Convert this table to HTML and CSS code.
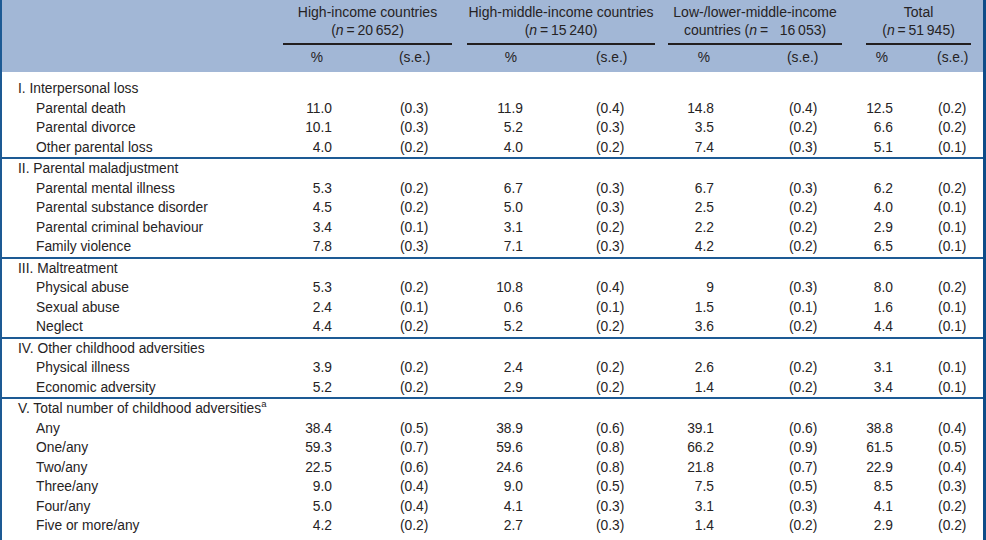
FILE: index.html
```html
<!DOCTYPE html>
<html lang="en">
<head>
<meta charset="utf-8">
<title>Childhood adversities by country income group</title>
<link rel="stylesheet" href="styles.css">
</head>
<body>
<div class="frame">
<table class="adv">
  <colgroup>
    <col class="c-lab">
    <col class="c-p1"><col class="c-s1">
    <col class="c-p2"><col class="c-s2">
    <col class="c-p3"><col class="c-s3">
    <col class="c-p4"><col class="c-s4">
  </colgroup>
  <thead>
    <tr class="groups">
      <th></th>
      <th colspan="2"><div class="grp g1">High-income countries<br>(<i>n</i>&thinsp;=&thinsp;20&thinsp;652)</div></th>
      <th colspan="2"><div class="grp g2">High-middle-income countries<br>(<i>n</i>&thinsp;=&thinsp;15&thinsp;240)</div></th>
      <th colspan="2"><div class="grp g3">Low-/lower-middle-income<br>countries (<i>n</i>&thinsp;=&nbsp;&nbsp;&nbsp;16&thinsp;053)</div></th>
      <th colspan="2"><div class="grp g4">Total<br>(<i>n</i>&thinsp;=&thinsp;51&thinsp;945)</div></th>
    </tr>
    <tr class="units">
      <th></th>
      <th class="p p1">%</th><th class="s s1">(s.e.)</th>
      <th class="p p2">%</th><th class="s s2">(s.e.)</th>
      <th class="p p3">%</th><th class="s s3">(s.e.)</th>
      <th class="p p4">%</th><th class="s s4">(s.e.)</th>
    </tr>
  </thead>
  <tbody class="sec first">
    <tr><td class="h" colspan="9">I. Interpersonal loss</td></tr>
    <tr><td class="item">Parental death</td><td class="p">11.0</td><td class="s s1">(0.3)</td><td class="p">11.9</td><td class="s s2">(0.4)</td><td class="p">14.8</td><td class="s s3">(0.4)</td><td class="p">12.5</td><td class="s s4">(0.2)</td></tr>
    <tr><td class="item">Parental divorce</td><td class="p">10.1</td><td class="s s1">(0.3)</td><td class="p">5.2</td><td class="s s2">(0.3)</td><td class="p">3.5</td><td class="s s3">(0.2)</td><td class="p">6.6</td><td class="s s4">(0.2)</td></tr>
    <tr><td class="item">Other parental loss</td><td class="p">4.0</td><td class="s s1">(0.2)</td><td class="p">4.0</td><td class="s s2">(0.2)</td><td class="p">7.4</td><td class="s s3">(0.3)</td><td class="p">5.1</td><td class="s s4">(0.1)</td></tr>
  </tbody>
  <tbody class="sec">
    <tr><td class="h" colspan="9">II. Parental maladjustment</td></tr>
    <tr><td class="item">Parental mental illness</td><td class="p">5.3</td><td class="s s1">(0.2)</td><td class="p">6.7</td><td class="s s2">(0.3)</td><td class="p">6.7</td><td class="s s3">(0.3)</td><td class="p">6.2</td><td class="s s4">(0.2)</td></tr>
    <tr><td class="item">Parental substance disorder</td><td class="p">4.5</td><td class="s s1">(0.2)</td><td class="p">5.0</td><td class="s s2">(0.3)</td><td class="p">2.5</td><td class="s s3">(0.2)</td><td class="p">4.0</td><td class="s s4">(0.1)</td></tr>
    <tr><td class="item">Parental criminal behaviour</td><td class="p">3.4</td><td class="s s1">(0.1)</td><td class="p">3.1</td><td class="s s2">(0.2)</td><td class="p">2.2</td><td class="s s3">(0.2)</td><td class="p">2.9</td><td class="s s4">(0.1)</td></tr>
    <tr><td class="item">Family violence</td><td class="p">7.8</td><td class="s s1">(0.3)</td><td class="p">7.1</td><td class="s s2">(0.3)</td><td class="p">4.2</td><td class="s s3">(0.2)</td><td class="p">6.5</td><td class="s s4">(0.1)</td></tr>
  </tbody>
  <tbody class="sec">
    <tr><td class="h" colspan="9">III. Maltreatment</td></tr>
    <tr><td class="item">Physical abuse</td><td class="p">5.3</td><td class="s s1">(0.2)</td><td class="p">10.8</td><td class="s s2">(0.4)</td><td class="p">9</td><td class="s s3">(0.3)</td><td class="p">8.0</td><td class="s s4">(0.2)</td></tr>
    <tr><td class="item">Sexual abuse</td><td class="p">2.4</td><td class="s s1">(0.1)</td><td class="p">0.6</td><td class="s s2">(0.1)</td><td class="p">1.5</td><td class="s s3">(0.1)</td><td class="p">1.6</td><td class="s s4">(0.1)</td></tr>
    <tr><td class="item">Neglect</td><td class="p">4.4</td><td class="s s1">(0.2)</td><td class="p">5.2</td><td class="s s2">(0.2)</td><td class="p">3.6</td><td class="s s3">(0.2)</td><td class="p">4.4</td><td class="s s4">(0.1)</td></tr>
  </tbody>
  <tbody class="sec">
    <tr><td class="h" colspan="9">IV. Other childhood adversities</td></tr>
    <tr><td class="item">Physical illness</td><td class="p">3.9</td><td class="s s1">(0.2)</td><td class="p">2.4</td><td class="s s2">(0.2)</td><td class="p">2.6</td><td class="s s3">(0.2)</td><td class="p">3.1</td><td class="s s4">(0.1)</td></tr>
    <tr><td class="item">Economic adversity</td><td class="p">5.2</td><td class="s s1">(0.2)</td><td class="p">2.9</td><td class="s s2">(0.2)</td><td class="p">1.4</td><td class="s s3">(0.2)</td><td class="p">3.4</td><td class="s s4">(0.1)</td></tr>
  </tbody>
  <tbody class="sec">
    <tr><td class="h" colspan="9">V. Total number of childhood adversities<sup>a</sup></td></tr>
    <tr><td class="item">Any</td><td class="p">38.4</td><td class="s s1">(0.5)</td><td class="p">38.9</td><td class="s s2">(0.6)</td><td class="p">39.1</td><td class="s s3">(0.6)</td><td class="p">38.8</td><td class="s s4">(0.4)</td></tr>
    <tr><td class="item">One/any</td><td class="p">59.3</td><td class="s s1">(0.7)</td><td class="p">59.6</td><td class="s s2">(0.8)</td><td class="p">66.2</td><td class="s s3">(0.9)</td><td class="p">61.5</td><td class="s s4">(0.5)</td></tr>
    <tr><td class="item">Two/any</td><td class="p">22.5</td><td class="s s1">(0.6)</td><td class="p">24.6</td><td class="s s2">(0.8)</td><td class="p">21.8</td><td class="s s3">(0.7)</td><td class="p">22.9</td><td class="s s4">(0.4)</td></tr>
    <tr><td class="item">Three/any</td><td class="p">9.0</td><td class="s s1">(0.4)</td><td class="p">9.0</td><td class="s s2">(0.5)</td><td class="p">7.5</td><td class="s s3">(0.5)</td><td class="p">8.5</td><td class="s s4">(0.3)</td></tr>
    <tr><td class="item">Four/any</td><td class="p">5.0</td><td class="s s1">(0.4)</td><td class="p">4.1</td><td class="s s2">(0.3)</td><td class="p">3.1</td><td class="s s3">(0.3)</td><td class="p">4.1</td><td class="s s4">(0.2)</td></tr>
    <tr><td class="item">Five or more/any</td><td class="p">4.2</td><td class="s s1">(0.2)</td><td class="p">2.7</td><td class="s s2">(0.3)</td><td class="p">1.4</td><td class="s s3">(0.2)</td><td class="p">2.9</td><td class="s s4">(0.2)</td></tr>
  </tbody>
</table>
</div>
</body>
</html>
```
FILE: styles.css
```css
html, body {
  margin: 0;
  padding: 0;
  background: #ffffff;
}
body {
  width: 986px;
  height: 540px;
  overflow: hidden;
}
.frame {
  width: 981px;
  height: 540px;
  border-left: 2px solid #1d5a94;
  border-right: 3px solid #0e4c88;
}
.adv {
  width: 981px;
  table-layout: fixed;
  border-collapse: separate;
  border-spacing: 0;
  font-family: "Liberation Sans", Arial, sans-serif;
  font-size: 13.8px;
  color: #262324;
}
.c-lab { width: 281px; }
.c-p1 { width: 49px; }
.c-s1 { width: 133px; }
.c-p2 { width: 58px; }
.c-s2 { width: 143px; }
.c-p3 { width: 48px; }
.c-s3 { width: 150px; }
.c-p4 { width: 29px; }
.c-s4 { width: 90px; }

thead { background: #a2b7d6; }
thead th {
  font-weight: normal;
  padding: 0;
}
.groups th {
  vertical-align: bottom;
  padding-top: 3px;
}
.grp {
  font-size: 14px;
  line-height: 18px;
  text-align: center;
  padding-bottom: 4px;
  border-bottom: 2px solid #231f20;
  white-space: nowrap;
}
.g1 { margin-right: 13px; }
.g2 { margin-left: 2px; margin-right: 11px; }
.g3 { margin-left: 2px; margin-right: 22px; }
.g4 { margin-left: 2px; margin-right: 12px; }
.units th {
  line-height: 18px;
  padding-top: 4px;
  padding-bottom: 5px;
}
.units th.p { text-align: right; }
.units th.s { text-align: left; }
.units .p1 { padding-right: 9px; }
.units .p2 { padding-right: 6px; }
.units .p3 { padding-right: 4px; }
.units .p4 { padding-right: 5px; }

td {
  padding: 0;
  height: 19.5px;
  line-height: 19.5px;
  white-space: nowrap;
}
td.h { padding-left: 16px; }
td.item { padding-left: 34px; }
td.p { text-align: right; }
td.s { text-align: left; }
.s1 { padding-left: 68px; }
.s2 { padding-left: 73px; }
.s3 { padding-left: 75px; }
.s4 { padding-left: 45px; }
.units th.s1 { padding-left: 67px; }
.units th.s3 { padding-left: 73px; }
.units th.s4 { padding-left: 44px; }

.sec.first tr:first-child td { padding-top: 7px; }
.sec + .sec tr:first-child td { border-top: 2px solid #1d5a94; }
sup {
  font-size: 9.5px;
  line-height: 0;
  vertical-align: 6px;
}
```
